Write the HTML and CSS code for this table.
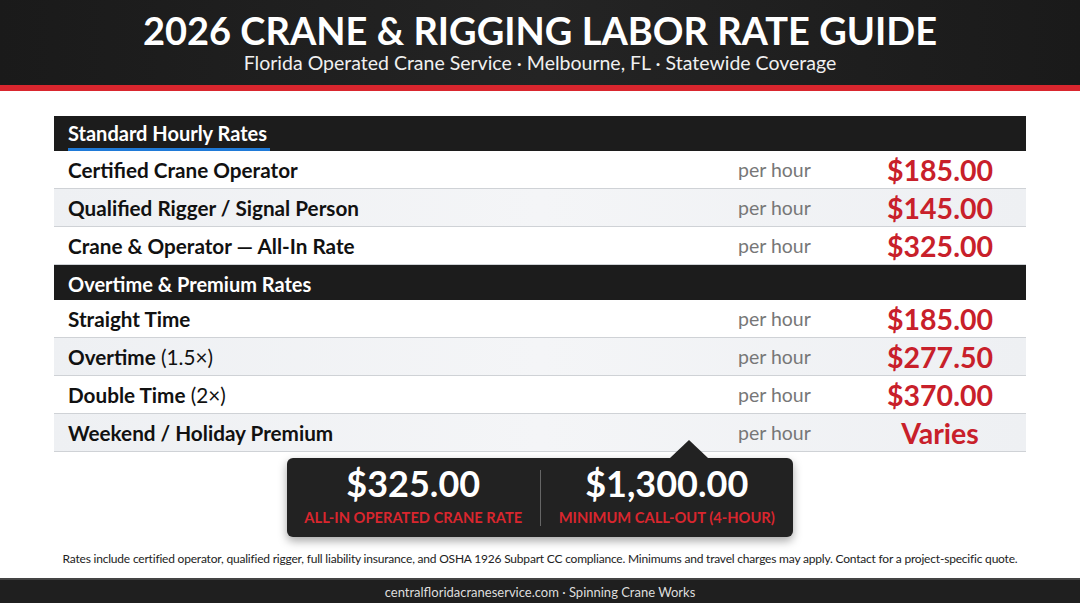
FILE: index.html
```html
<!DOCTYPE html>
<html>
<head>
<meta charset="utf-8">
<link rel="stylesheet" href="styles.css">
</head>
<body>
<header class="top">
  <h1 class="title">2026 CRANE &amp; RIGGING LABOR RATE GUIDE</h1>
  <p class="subtitle">Florida Operated Crane Service · Melbourne, FL · Statewide Coverage</p>
</header>
<div class="redline"></div>
<main class="content">
  <section class="table">
    <div class="section-head"><span class="sh-text underlined">Standard Hourly Rates</span></div>
    <div class="row odd"><span class="label"><b>Certified Crane Operator</b></span><span class="unit">per hour</span><span class="price">$185.00</span></div>
    <div class="row even"><span class="label"><b>Qualified Rigger / Signal Person</b></span><span class="unit">per hour</span><span class="price">$145.00</span></div>
    <div class="row odd"><span class="label"><b>Crane &amp; Operator — All-In Rate</b></span><span class="unit">per hour</span><span class="price">$325.00</span></div>
    <div class="section-head"><span class="sh-text">Overtime &amp; Premium Rates</span></div>
    <div class="row odd"><span class="label"><b>Straight Time</b></span><span class="unit">per hour</span><span class="price">$185.00</span></div>
    <div class="row even"><span class="label"><b>Overtime</b> <span class="mult">(1.5×)</span></span><span class="unit">per hour</span><span class="price">$277.50</span></div>
    <div class="row odd"><span class="label"><b>Double Time</b> <span class="mult">(2×)</span></span><span class="unit">per hour</span><span class="price">$370.00</span></div>
    <div class="row even"><span class="label"><b>Weekend / Holiday Premium</b></span><span class="unit">per hour</span><span class="price varies">Varies</span></div>
  </section>
  <div class="callout-wrap">
    <div class="callout">
      <div class="arrow"></div>
      <div class="stat">
        <div class="stat-value">$325.00</div>
        <div class="stat-label">ALL-IN OPERATED CRANE RATE</div>
      </div>
      <div class="divider"></div>
      <div class="stat">
        <div class="stat-value">$1,300.00</div>
        <div class="stat-label">MINIMUM CALL-OUT (4-HOUR)</div>
      </div>
    </div>
  </div>
  <p class="note">Rates include certified operator, qualified rigger, full liability insurance, and OSHA 1926 Subpart CC compliance. Minimums and travel charges may apply. Contact for a project-specific quote.</p>
</main>
<footer class="bottom">centralfloridacraneservice.com · Spinning Crane Works</footer>
</body>
</html>
```
FILE: styles.css
```css
* { box-sizing: border-box; }
html, body { margin: 0; padding: 0; }
body {
  width: 1080px;
  height: 603px;
  overflow: hidden;
  background: #ffffff;
  font-family: Lato, "Open Sans", sans-serif;
  color: #111;
  display: flex;
  flex-direction: column;
}
.top {
  height: 85px;
  background: linear-gradient(90deg, #1a1a1a 0%, #242424 50%, #1a1a1a 100%);
  display: flex;
  flex-direction: column;
  align-items: center;
  padding-top: 8px;
}
.title {
  margin: 0;
  color: #fff;
  font-size: 38px;
  font-weight: 700;
  line-height: 44px;
}
.subtitle {
  margin: 0;
  color: #f0f0f0;
  font-size: 19.5px;
  line-height: 22px;
}
.redline {
  height: 6px;
  background: #d9262e;
}
.content {
  flex: 1;
  display: flex;
  flex-direction: column;
  align-items: center;
  padding-top: 25px;
}
.table {
  width: 972px;
  display: flex;
  flex-direction: column;
}
.section-head {
  height: 35px;
  background: #1c1c1c;
  padding-left: 14px;
  display: flex;
  align-items: stretch;
}
.sh-text {
  color: #fff;
  font-weight: 700;
  font-size: 20px;
  display: flex;
  align-items: center;
  padding-top: 2px;
  padding-right: 3px;
}
.underlined {
  border-bottom: 3px solid #1f7ad8;
}
.row {
  height: 38px;
  display: grid;
  grid-template-columns: 1fr 116px 172px;
  align-items: center;
  padding-left: 14px;
  border-bottom: 1px solid #cfd2d6;
}
.row.odd { background: #ffffff; }
.row.even { background: linear-gradient(90deg, #eef0f3, #f4f5f7 50%, #eef0f3); }
.label {
  font-size: 20.7px;
  color: #111;
}
.label b { font-weight: 700; }
.mult { font-weight: 400; }
.unit {
  font-size: 19.5px;
  color: #777;
}
.price {
  text-align: center;
  color: #c8202a;
  font-weight: 700;
  font-size: 28.5px;
}
.callout-wrap {
  width: 972px;
  display: flex;
  justify-content: center;
  margin-top: 6px;
}
.callout {
  position: relative;
  width: 506px;
  height: 79px;
  background: #222;
  border-radius: 6px;
  box-shadow: 0 4px 10px rgba(0,0,0,0.35);
  display: flex;
  align-items: center;
}
.arrow {
  position: absolute;
  top: -18px;
  left: 383px;
  width: 0;
  height: 0;
  border-left: 19px solid transparent;
  border-right: 19px solid transparent;
  border-bottom: 18px solid #222;
}
.stat {
  flex: 1;
  align-self: flex-start;
  display: flex;
  flex-direction: column;
  align-items: center;
  padding-top: 3px;
}
.stat-value {
  color: #fff;
  font-weight: 700;
  font-size: 36px;
  line-height: 44px;
}
.stat-label {
  color: #d9262e;
  font-weight: 700;
  font-size: 14.7px;
  line-height: 18px;
  margin-top: 3px;
}
.divider {
  width: 1px;
  height: 56px;
  background: #666;
}
.note {
  margin: 14px 0 0;
  font-size: 12px;
  letter-spacing: -0.2px;
  color: #222;
  text-align: center;
}
.bottom {
  height: 25px;
  background: #1f1f1f;
  border-top: 2px solid #444;
  color: #ddd;
  font-size: 13px;
  display: flex;
  align-items: center;
  justify-content: center;
}
```
